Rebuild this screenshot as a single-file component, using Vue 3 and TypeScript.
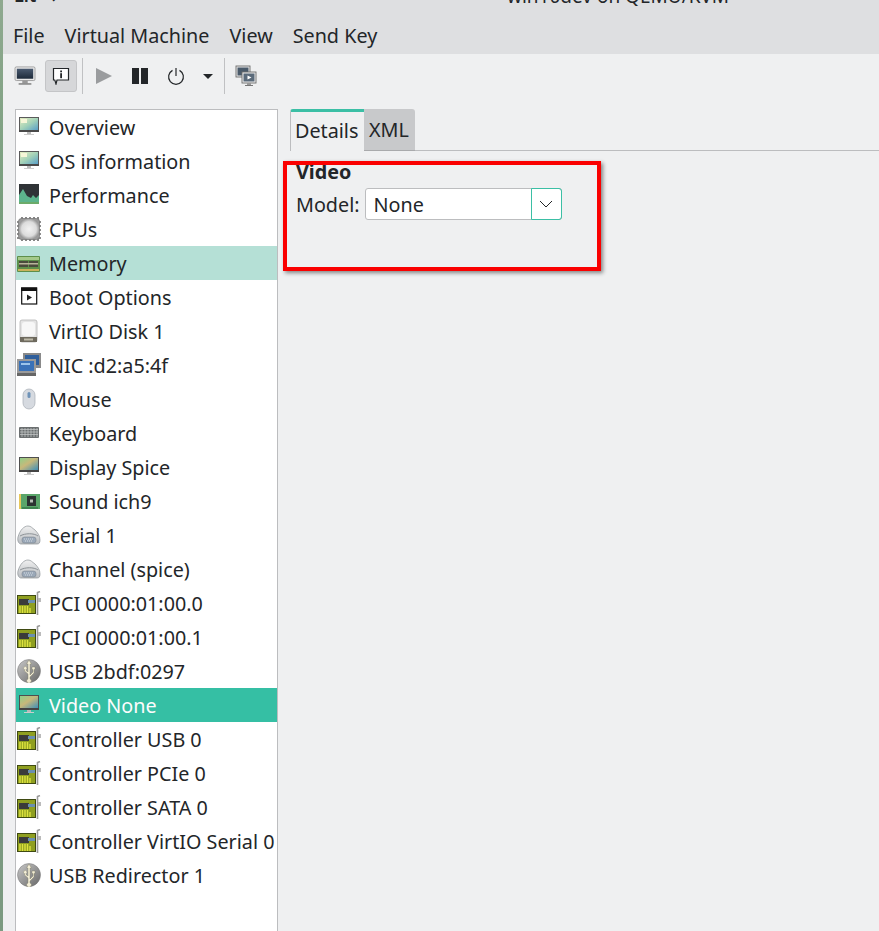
<template>
  <div class="desktop">
    <svg class="sprites" width="0" height="0" aria-hidden="true">
      <defs>
        <linearGradient id="wall" x1="0" y1="0" x2="1" y2="1">
          <stop offset="0" stop-color="#e6ecc0" />
          <stop offset="0.5" stop-color="#a3d2b8" />
          <stop offset="1" stop-color="#5a9fc8" />
        </linearGradient>
        <linearGradient id="wall2" x1="0" y1="0" x2="1" y2="1">
          <stop offset="0" stop-color="#8fd08a" />
          <stop offset="0.45" stop-color="#c8b87a" />
          <stop offset="1" stop-color="#3f8fb8" />
        </linearGradient>
        <linearGradient id="blueScreen" x1="0" y1="0" x2="0" y2="1">
          <stop offset="0" stop-color="#4a5a70" />
          <stop offset="1" stop-color="#1d2a3a" />
        </linearGradient>
        <linearGradient id="usbDisc" x1="0" y1="0" x2="1" y2="1">
          <stop offset="0" stop-color="#c8c8c8" />
          <stop offset="1" stop-color="#666" />
        </linearGradient>
        <radialGradient id="chip">
          <stop offset="0" stop-color="#f2f2f2" />
          <stop offset="0.7" stop-color="#dcdcdc" />
          <stop offset="1" stop-color="#9a9a9a" />
        </radialGradient>
        <linearGradient id="hood" x1="0" y1="0" x2="0" y2="1">
          <stop offset="0" stop-color="#f0f0f0" />
          <stop offset="1" stop-color="#b8bcc0" />
        </linearGradient>

        <symbol id="i-monitor" viewBox="0 0 24 24">
          <rect x="2" y="2" width="20" height="15" fill="#5a5a5a" />
          <rect x="3" y="3" width="18" height="12" fill="url(#wall)" />
          <rect x="4" y="4" width="6" height="4" fill="#f6f6d8" />
          <rect x="2" y="15" width="20" height="2" fill="#4a4a4a" />
          <rect x="10" y="17" width="4" height="2" fill="#bbb" />
          <rect x="7" y="19" width="10" height="1" fill="#ccc" />
        </symbol>
        <symbol id="i-display" viewBox="0 0 24 24">
          <rect x="2" y="2" width="20" height="15" fill="#4f4f4f" />
          <rect x="3" y="3" width="18" height="12" fill="url(#wall2)" />
          <rect x="2" y="15" width="20" height="2" fill="#444" />
          <rect x="10" y="17" width="4" height="2" fill="#bbb" />
          <rect x="7" y="19" width="10" height="1" fill="#ccc" />
        </symbol>
        <symbol id="i-perf" viewBox="0 0 24 24">
          <rect x="2" y="1" width="20" height="20" fill="#2f3336" />
          <path d="M2 19 L2 12 L6 6 L10 13 L14 15 L16 12 L19 15 L22 12 L22 19Z" fill="#5cb48c" />
          <rect x="2" y="19" width="20" height="2" fill="#6cab6a" />
        </symbol>
        <symbol id="i-cpu" viewBox="0 0 24 24">
          <path d="M0 5h24M0 9h24M0 13h24M0 17h24M0 21h24M5 0v24M9 0v24M13 0v24M17 0v24M21 0v24" stroke="#6a6a6a" stroke-width="1.6" />
          <rect x="1.5" y="1.5" width="21" height="21" rx="3" fill="url(#chip)" stroke="#7a7a7a" stroke-width="0.8" />
        </symbol>
        <symbol id="i-memory" viewBox="0 0 24 24">
          <rect x="0" y="5" width="23" height="16" rx="1" fill="#5e8f4a" />
          <rect x="1" y="6" width="21" height="3" fill="#a4c98a" />
          <rect x="2" y="10" width="9" height="6" fill="#4a4a3c" />
          <rect x="12" y="10" width="9" height="6" fill="#4a4a3c" />
          <rect x="2" y="12" width="19" height="1.5" fill="#b8b49a" />
          <rect x="1" y="18" width="21" height="2" fill="#c9b25a" />
        </symbol>
        <symbol id="i-boot" viewBox="0 0 24 24">
          <rect x="4.7" y="3" width="15" height="16" fill="#fff" stroke="#111" stroke-width="1.2" />
          <rect x="4" y="2.5" width="16" height="3.5" fill="#111" />
          <path d="M10 9.5 L15 12.5 L10 15.5Z" fill="#222" />
        </symbol>
        <symbol id="i-disk" viewBox="0 0 24 24">
          <rect x="3" y="1" width="17" height="22" rx="2" fill="#e4e4e4" stroke="#b5b5b5" stroke-width="0.8" />
          <rect x="5" y="3" width="13" height="14" rx="3" fill="#f7f7f7" />
          <rect x="3" y="18" width="17" height="5" fill="#6e6a5e" />
          <rect x="7" y="19.5" width="9" height="2" fill="#bdb9a8" />
        </symbol>
        <symbol id="i-nic" viewBox="0 0 24 24">
          <rect x="6" y="0" width="18" height="15" fill="#8a8a8a" />
          <rect x="8" y="2" width="14" height="10" fill="#2f5f9c" />
          <rect x="0" y="6" width="19" height="17" fill="#9a9a9a" />
          <rect x="2" y="8" width="15" height="10" fill="#3a72b8" />
          <rect x="4" y="10" width="9" height="2" fill="#9cc4ea" />
          <rect x="0" y="20" width="19" height="3" fill="#666" />
        </symbol>
        <symbol id="i-mouse" viewBox="0 0 24 24">
          <rect x="6" y="2" width="12" height="20" rx="6" fill="#d6dae0" stroke="#a8adb5" stroke-width="0.7" />
          <rect x="10.5" y="5" width="3" height="6" rx="1.5" fill="#6f93b8" />
        </symbol>
        <symbol id="i-keyboard" viewBox="0 0 24 24">
          <rect x="2" y="6" width="20" height="11" rx="1" fill="#6b6f70" />
          <path d="M3 8.5h18M3 11h18M3 13.5h18M5 7v9M8 7v9M11 7v9M14 7v9M17 7v9M20 7v9" stroke="#c8cccc" stroke-width="0.7" />
        </symbol>
        <symbol id="i-sound" viewBox="0 0 24 24">
          <rect x="2" y="5" width="21" height="15" fill="#5aa56a" />
          <rect x="2" y="5" width="2" height="15" fill="#e8c85a" />
          <rect x="10" y="7" width="9" height="10" fill="#2c3432" />
          <rect x="13" y="10.5" width="3" height="3" fill="#b8c0b8" />
          <rect x="5" y="18" width="16" height="2" fill="#3f8450" />
        </symbol>
        <symbol id="i-serial" viewBox="0 0 24 24">
          <path d="M1 14 C3 7 7 3 11 3 C14 3 15 5 18 7 C21 10 23 13 23 17 C23 20 22 21 20 21 L4 21 C2 21 0 18 1 14Z" fill="url(#hood)" stroke="#8d9296" stroke-width="0.7" />
          <path d="M3 13 C8 10 17 10 21 13" fill="none" stroke="#8d9296" stroke-width="1" />
          <rect x="5" y="14" width="14" height="6" rx="2.5" fill="#9aa8b8" stroke="#777e86" stroke-width="0.5" />
          <path d="M7 16h10M8 18h8" stroke="#e4e8ec" stroke-width="0.8" stroke-dasharray="1 1" />
        </symbol>
        <symbol id="i-pci" viewBox="0 0 24 24">
          <rect x="0" y="4" width="19" height="19" fill="#3f4a12" />
          <rect x="1" y="5" width="17" height="17" fill="#8f9f20" />
          <rect x="2" y="8" width="10" height="6" fill="#3a3a3a" />
          <rect x="11" y="9" width="7" height="3" fill="#6a8fb0" />
          <path d="M3 15v7M5.5 15v7M8 15v7M10.5 15v7M13 17v5" stroke="#dde23e" stroke-width="1.4" />
          <path d="M23 0.5 L20.5 1.5 L20.5 24" stroke="#9a9a9a" stroke-width="1.6" fill="none" />
          <rect x="21" y="7" width="3" height="4" fill="#bbb" />
        </symbol>
        <symbol id="i-usb" viewBox="0 0 24 24">
          <circle cx="12" cy="12" r="11.5" fill="url(#usbDisc)" stroke="#777" stroke-width="0.5" />
          <path d="M12 1 L14.5 5 L13 5 L13 16 L16 13 L16 10.5 L15 10.5 L15 8 L18 8 L18 10.5 L17 10.5 L17 14 L13 18 L13 20 A2.2 2.2 0 1 1 11 20 L11 15 L7.5 12 L7.5 10.5 A1.6 1.6 0 1 1 9 10.5 L9 11.5 L11 13 L11 5 L9.5 5Z" fill="#f4efd8" stroke="#7c7860" stroke-width="0.4" />
        </symbol>
      </defs>
    </svg>

    <div class="wall-edge" />

    <div class="window">
      <header class="titlebar">
        <span class="title-left">Lit</span>
        <span class="title-arrow">↗</span>
        <span class="title-text">win10dev on QEMU/KVM</span>
      </header>

      <nav class="menubar">
        <span v-for="m in menus" :key="m" class="menu-item">{{ m }}</span>
      </nav>

      <div class="toolbar">
        <button type="button" class="tool tool-first">
          <svg width="22" height="20" viewBox="0 0 24 22">
            <rect x="1" y="1" width="22" height="15" rx="1.5" fill="#e8e8e8" stroke="#8a8a8a" stroke-width="0.8" />
            <rect x="3" y="3" width="18" height="11" fill="url(#blueScreen)" />
            <rect x="9" y="16" width="6" height="3" fill="#999" />
            <rect x="5" y="19" width="14" height="1.5" fill="#777" />
          </svg>
        </button>
        <button type="button" class="tool tool-on">
          <svg width="18" height="18" viewBox="0 0 18 18">
            <path d="M1.5 1.5H16.5V13H5L4 17L2.8 13H1.5Z" fill="#fff" stroke="#232629" stroke-width="1.2" />
            <rect x="8.2" y="3.5" width="1.8" height="1.8" fill="#232629" />
            <rect x="8.2" y="6.2" width="1.8" height="5" fill="#232629" />
          </svg>
        </button>
        <span class="sep" />
        <button type="button" class="tool tool-play">
          <svg width="18" height="18" viewBox="0 0 18 18"><path d="M1 1L17 9L1 17Z" fill="#9a9c9e" /></svg>
        </button>
        <button type="button" class="tool tool-pause">
          <svg width="18" height="18" viewBox="0 0 18 18">
            <rect x="1" y="1" width="7" height="16" fill="#232629" />
            <rect x="10" y="1" width="7" height="16" fill="#232629" />
          </svg>
        </button>
        <button type="button" class="tool tool-power">
          <svg width="18" height="18" viewBox="0 0 18 18">
            <path d="M5.5 3.4 A7.4 7.4 0 1 0 12.5 3.4" fill="none" stroke="#232629" stroke-width="1.2" />
            <path d="M9 1V9" stroke="#232629" stroke-width="1.2" />
          </svg>
        </button>
        <svg class="caret" width="10" height="5" viewBox="0 0 10 5"><path d="M0 0H10L5 5Z" fill="#232629" /></svg>
        <span class="sep sep-right" />
        <button type="button" class="tool tool-snap">
          <svg width="22" height="22" viewBox="0 0 22 22">
            <rect x="1" y="1" width="14" height="11" fill="#e8e8e8" stroke="#6c6c6c" stroke-width="0.9" />
            <rect x="2.5" y="2.5" width="11" height="8" fill="#4a5a6a" />
            <rect x="7" y="7" width="14" height="11" fill="#eee" stroke="#6c6c6c" stroke-width="0.9" />
            <rect x="8.5" y="8.5" width="11" height="8" fill="#5a6a7a" />
            <path d="M12.5 10.5L16.5 12.5L12.5 14.5Z" fill="#fff" />
            <rect x="12" y="18" width="4" height="2" fill="#999" />
            <rect x="10" y="20" width="8" height="1" fill="#777" />
          </svg>
        </button>
      </div>

      <div class="content">
        <aside class="sidebar">
          <div
            v-for="row in rows"
            :key="row.label"
            class="row"
            :class="{ hover: row.label === 'Memory', selected: row.label === 'Video None' }"
          >
            <svg class="row-icon" width="24" height="24"><use :href="`#${row.icon}`" /></svg>
            <span class="row-label">{{ row.label }}</span>
          </div>
        </aside>

        <main class="pane">
          <div class="tabs">
            <div class="tab tab-active">Details</div>
            <div class="tab tab-other">XML</div>
          </div>
          <section class="details">
            <h3 class="heading">Video</h3>
            <div class="field">
              <label class="field-label">Model:</label>
              <div class="combo">
                <span class="combo-value">None</span>
                <span class="combo-arrow">
                  <svg width="14" height="8" viewBox="0 0 14 8"><path d="M1 1L7 7L13 1" fill="none" stroke="#232629" stroke-width="1" /></svg>
                </span>
              </div>
            </div>
          </section>
        </main>
      </div>

      <div class="annotation" />
    </div>
  </div>
</template>

<script setup lang="ts">
interface Row {
  label: string
  icon: string
}

const menus = ['File', 'Virtual Machine', 'View', 'Send Key']

const rows: Row[] = [
  { label: 'Overview', icon: 'i-monitor' },
  { label: 'OS information', icon: 'i-monitor' },
  { label: 'Performance', icon: 'i-perf' },
  { label: 'CPUs', icon: 'i-cpu' },
  { label: 'Memory', icon: 'i-memory' },
  { label: 'Boot Options', icon: 'i-boot' },
  { label: 'VirtIO Disk 1', icon: 'i-disk' },
  { label: 'NIC :d2:a5:4f', icon: 'i-nic' },
  { label: 'Mouse', icon: 'i-mouse' },
  { label: 'Keyboard', icon: 'i-keyboard' },
  { label: 'Display Spice', icon: 'i-display' },
  { label: 'Sound ich9', icon: 'i-sound' },
  { label: 'Serial 1', icon: 'i-serial' },
  { label: 'Channel (spice)', icon: 'i-serial' },
  { label: 'PCI 0000:01:00.0', icon: 'i-pci' },
  { label: 'PCI 0000:01:00.1', icon: 'i-pci' },
  { label: 'USB 2bdf:0297', icon: 'i-usb' },
  { label: 'Video None', icon: 'i-display' },
  { label: 'Controller USB 0', icon: 'i-pci' },
  { label: 'Controller PCIe 0', icon: 'i-pci' },
  { label: 'Controller SATA 0', icon: 'i-pci' },
  { label: 'Controller VirtIO Serial 0', icon: 'i-pci' },
  { label: 'USB Redirector 1', icon: 'i-usb' }
]
</script>

<style>
html,
body {
  margin: 0;
  background: #eff0f1;
}
</style>

<style scoped>
.desktop {
  display: flex;
  width: 879px;
  height: 931px;
  overflow: hidden;
  font-family: "Noto Sans", "Open Sans", sans-serif;
  font-size: 19.75px;
  color: #232629;
}

.sprites {
  position: absolute;
}

.wall-edge {
  flex: 0 0 3px;
  background: linear-gradient(to bottom, #8fa98f 0, #6f9a76 300px, #86a088 520px, #a9a89c 680px, #7b9a80 760px, #7b9a80 100%);
}

.window {
  position: relative;
  flex: 1;
  display: flex;
  flex-direction: column;
  background: #eff0f1;
}

.titlebar {
  position: relative;
  flex: 0 0 24px;
  background: #dedfe1;
  overflow: hidden;
}

.title-left {
  position: absolute;
  left: 11px;
  bottom: 17px;
  font-size: 18px;
  font-weight: 600;
  line-height: 24px;
}

.title-arrow {
  position: absolute;
  left: 47px;
  bottom: 17px;
  font-size: 18px;
  line-height: 24px;
}

.title-text {
  position: absolute;
  left: 504px;
  bottom: 16px;
  font-size: 19px;
  line-height: 24px;
  white-space: nowrap;
}

.menubar {
  display: flex;
  flex: 0 0 30px;
  gap: 20px;
  padding: 0 0 0 10px;
  background: #dedfe1;
  line-height: 24px;
}

.menu-item {
  display: block;
}

.toolbar {
  display: flex;
  align-items: center;
  flex: 0 0 44px;
  padding: 0 0 0 6px;
  height: 44px;
}

.tool {
  display: flex;
  align-items: center;
  justify-content: center;
  width: 32px;
  height: 32px;
  padding: 0;
  border: 1px solid transparent;
  border-radius: 3px;
  background: none;
}

.tool-first {
  margin-right: 4px;
}

.tool-on {
  background: #d6d7d9;
  border-color: #c4c5c7;
}

.sep {
  width: 1px;
  height: 36px;
  margin: 0 4px 0 5px;
  background: #c0c1c3;
}

.tool-play {
  margin-left: 1px;
}

.tool-pause {
  margin-left: 4px;
}

.tool-power {
  margin-left: 4px;
}

.caret {
  margin-left: 11px;
}

.sep-right {
  margin-left: 11px;
  margin-right: 0;
}

.tool-snap {
  margin-left: 5px;
}

.content {
  flex: 1;
  display: flex;
  min-height: 0;
  padding: 11px 0 0 12px;
}

.sidebar {
  flex: 0 0 263px;
  box-sizing: border-box;
  border: 1px solid #bcbdbf;
  border-bottom: none;
  background: #fff;
}

.row {
  display: flex;
  align-items: center;
  height: 34px;
  padding-left: 1px;
  white-space: nowrap;
}

.row-icon {
  flex: none;
}

.row-label {
  margin-left: 8px;
}

.row.hover {
  background: #b5e0d6;
}

.row.selected {
  background: #35bfa4;
  color: #fcfcfc;
}

.pane {
  flex: 1;
  min-width: 0;
  padding-left: 12px;
}

.tabs {
  display: flex;
  height: 42px;
  box-sizing: border-box;
  border-bottom: 1px solid #bcbdbf;
}

.tab {
  box-sizing: border-box;
  height: 42px;
}

.tab-active {
  width: 74px;
  padding-left: 4px;
  border-left: 1px solid #bcbdbf;
  border-top: 3px solid #3bbfa5;
  line-height: 38px;
  border-top-left-radius: 3px;
  background: #eff0f1;
}

.tab-other {
  width: 51px;
  padding-left: 5px;
  background: #c8c9cb;
  border-bottom: 1px solid #a9aaac;
  border-top-right-radius: 3px;
  line-height: 42px;
}

.details {
  padding: 7px 0 0 6px;
}

.heading {
  margin: 0;
  font-size: 19.75px;
  font-weight: 700;
  line-height: 28px;
}

.field {
  display: flex;
  align-items: flex-start;
  gap: 5px;
  margin-top: 2px;
}

.field-label {
  line-height: 34px;
}

.combo {
  display: flex;
  width: 197px;
  height: 32px;
  box-sizing: border-box;
  border: 1px solid #bcbdbf;
  border-radius: 3px;
  background: #fff;
}

.combo-value {
  flex: 1;
  padding-left: 8px;
  line-height: 32px;
}

.combo-arrow {
  display: flex;
  align-items: center;
  justify-content: center;
  width: 29px;
  margin: -1px -1px -1px 0;
  border: 1px solid #3bbfa5;
  border-radius: 0 3px 3px 0;
}

/* red box drawn on top of the screenshot */
.annotation {
  position: absolute;
  left: 280px;
  top: 161px;
  width: 318px;
  height: 110px;
  box-sizing: border-box;
  border: 4px solid #fa0000;
  box-shadow: 2px 2px 4px rgba(0, 0, 0, 0.45);
}
</style>
